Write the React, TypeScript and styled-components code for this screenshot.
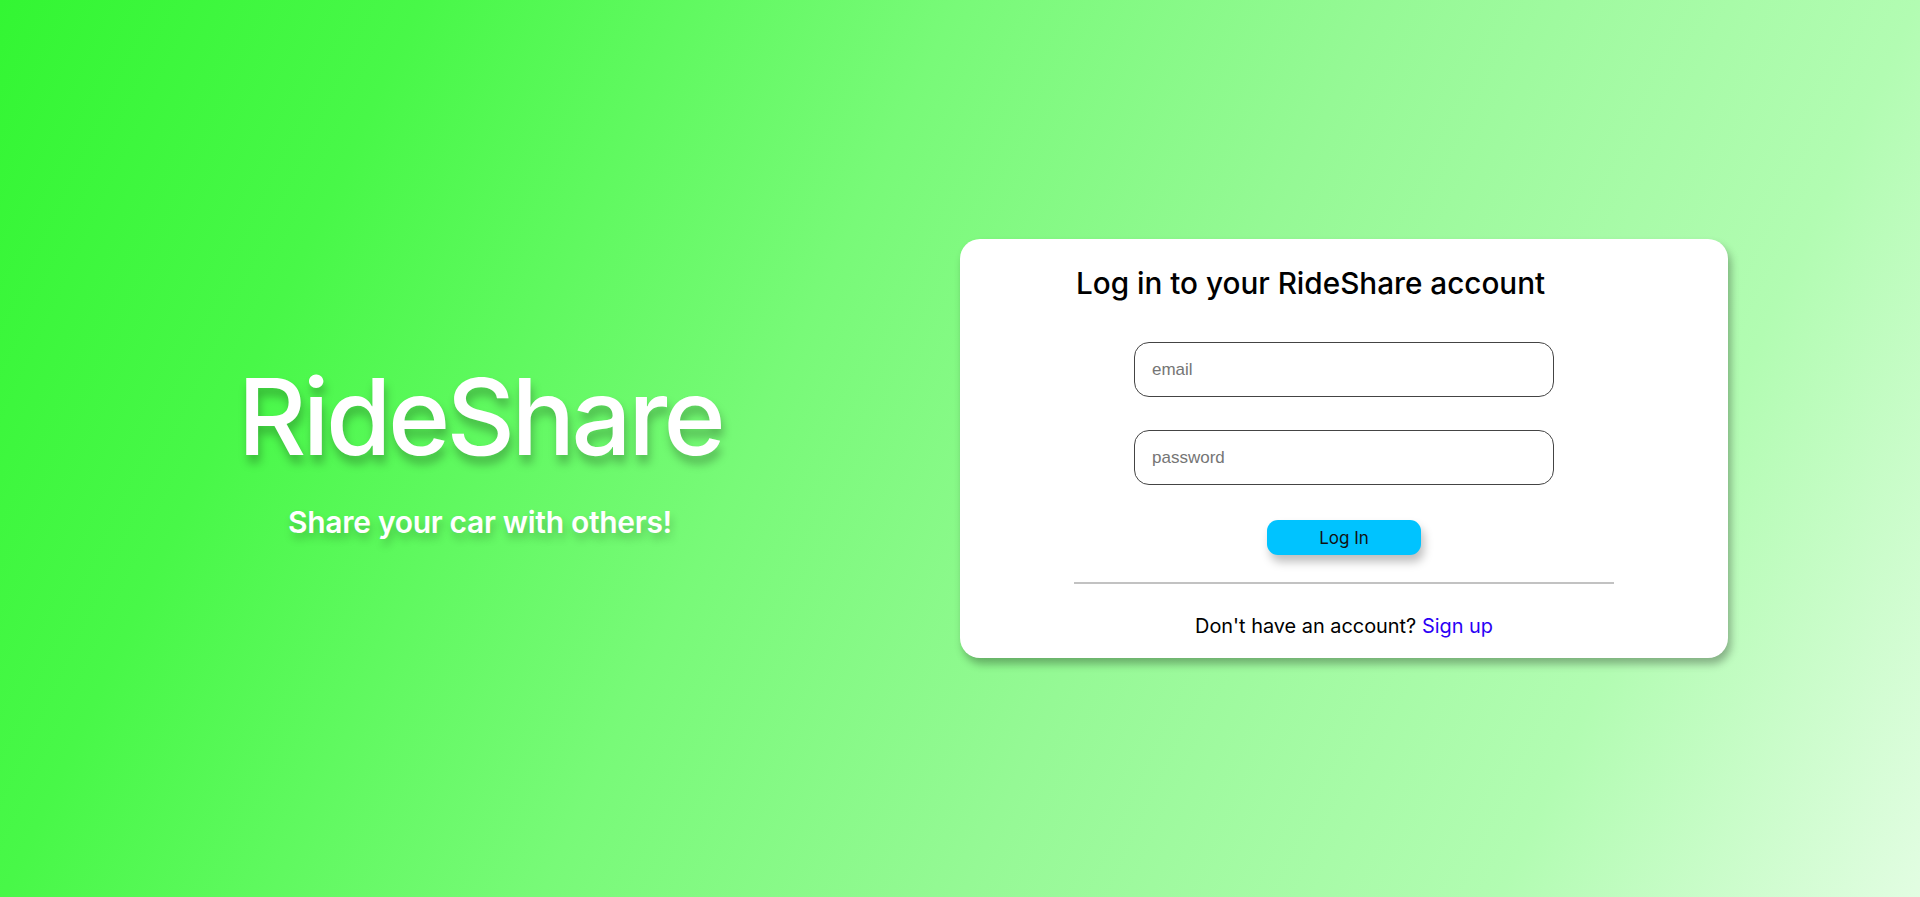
import React from "react";
import styled, { createGlobalStyle } from "styled-components";

const GlobalStyle = createGlobalStyle`
  html, body {
    margin: 0;
    padding: 0;
  }
  body {
    font-family: Inter, "Noto Sans", sans-serif;
  }
  * {
    box-sizing: border-box;
  }
`;

const Page = styled.main`
  min-height: 100vh;
  display: flex;
  align-items: center;
  background: linear-gradient(
    115deg,
    #33f633 0%,
    #48f848 18%,
    #78fa78 41%,
    #95f995 59%,
    #b2fcb2 82%,
    #e2fde2 100%
  );
`;

const Hero = styled.section`
  width: 50%;
  display: flex;
  flex-direction: column;
  align-items: center;
  gap: 34px;
  padding-top: 6px;
  color: #ffffff;
`;

const Brand = styled.h1`
  margin: 0;
  font-size: 106px;
  font-weight: 500;
  letter-spacing: -3.6px;
  line-height: 1;
  text-shadow: 2px 8px 10px rgba(0, 0, 0, 0.26);
`;

const Tagline = styled.p`
  margin: 0;
  font-size: 30px;
  font-weight: 600;
  letter-spacing: -0.3px;
  line-height: 1.2;
  text-shadow: 2px 6px 8px rgba(0, 0, 0, 0.22);
`;

const Side = styled.section`
  flex: 1;
  display: flex;
  justify-content: flex-start;
`;

const Card = styled.div`
  width: 768px;
  background: #ffffff;
  border-radius: 20px;
  box-shadow: 3px 6px 8px rgba(0, 0, 0, 0.3);
  padding: 26px 0 21px;
  display: flex;
  flex-direction: column;
  align-items: center;
`;

const Inner = styled.div`
  width: 540px;
  display: flex;
  flex-direction: column;
`;

const Title = styled.h2`
  margin: 0 0 41px 2px;
  font-size: 29.7px;
  font-weight: 500;
  line-height: 36px;
  color: #000000;
`;

const Form = styled.form`
  display: flex;
  flex-direction: column;
  align-items: center;
`;

const Field = styled.input<{ $gap: number }>`
  width: 420px;
  height: 55px;
  margin-bottom: ${(p) => p.$gap}px;
  padding: 0 17px;
  border: 1px solid #444444;
  border-radius: 15px;
  font-family: "Liberation Sans", Arial, sans-serif;
  font-size: 17px;
  color: #222222;
  background: #ffffff;
  outline: none;
  &::placeholder {
    color: #757575;
  }
`;

const Button = styled.button`
  width: 154px;
  height: 35px;
  border: none;
  border-radius: 11px;
  background: #00c3ff;
  color: #111111;
  font-family: Inter, "Noto Sans", sans-serif;
  font-size: 17px;
  box-shadow: 3px 7px 10px rgba(0, 0, 0, 0.25);
  cursor: pointer;
`;

const Divider = styled.hr`
  width: 100%;
  margin: 27px 0 31px;
  border: none;
  border-top: 2px solid #c2c2c2;
`;

const Footer = styled.p`
  margin: 0;
  text-align: center;
  font-size: 19.9px;
  line-height: 22px;
  color: #000000;
`;

const Link = styled.a`
  color: #2a00f5;
  text-decoration: none;
`;

export default function App() {
  return (
    <>
      <GlobalStyle />
      <Page>
        <Hero>
          <Brand>RideShare</Brand>
          <Tagline>Share your car with others!</Tagline>
        </Hero>
        <Side>
          <Card>
            <Inner>
              <Title>Log in to your RideShare account</Title>
              <Form onSubmit={(e) => e.preventDefault()}>
                <Field $gap={33} type="email" placeholder="email" />
                <Field $gap={35} type="password" placeholder="password" />
                <Button type="submit">Log In</Button>
              </Form>
              <Divider />
              <Footer>
                Don't have an account? <Link href="#">Sign up</Link>
              </Footer>
            </Inner>
          </Card>
        </Side>
      </Page>
    </>
  );
}
